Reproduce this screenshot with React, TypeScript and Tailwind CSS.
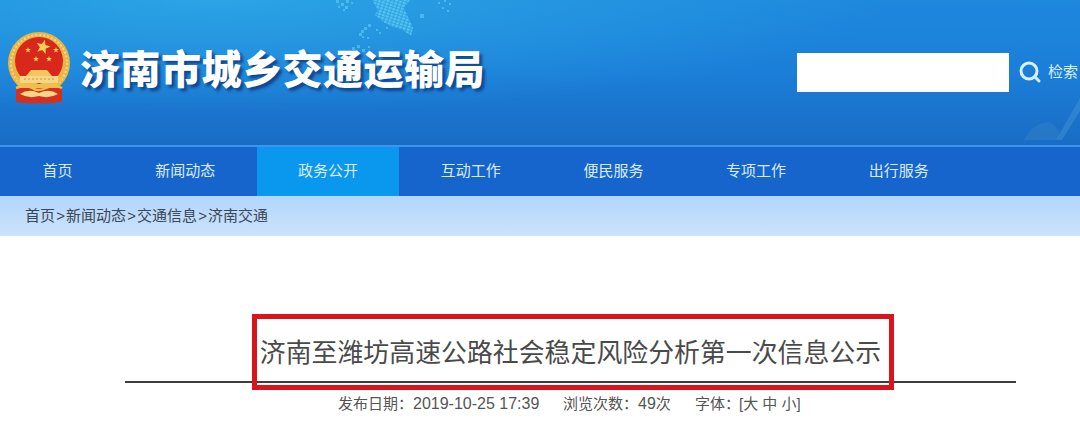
const cjk = "font-['Liberation_Sans','Noto_Sans_CJK_SC',sans-serif]";

const navItems = ["首页", "新闻动态", "政务公开", "互动工作", "便民服务", "专项工作", "出行服务"];
const crumbs = ["首页", "新闻动态", "交通信息", "济南交通"];

// 顶部的像素地图装饰
const pixels: [number, number, number][] = [
  [336, 0, 3], [341, 3, 3], [346, 0, 3], [345, 6, 3], [351, 2, 2], [338, 6, 2], [343, 9, 2],
  [420, 14, 4], [438, 2, 2], [444, 0, 2], [449, 3, 2], [442, 7, 2], [447, 10, 2],
  [368, 24, 3], [364, 27, 3], [361, 30, 3], [359, 33, 3], [362, 36, 2], [376, 29, 2], [379, 32, 2], [386, 27, 2],
  [352, 47, 3], [357, 45, 3], [362, 49, 3], [367, 37, 2], [368, 46, 2],
];

function PixelMap() {
  return (
    <svg className="absolute left-0 top-0" width="500" height="60" fill="#5cc8f0">
      <defs>
        <pattern id="grid" width="4" height="3" patternUnits="userSpaceOnUse" patternTransform="rotate(18)">
          <rect width="2.6" height="2" fill="#62cdf2" />
        </pattern>
      </defs>
      <path d="M372 0h38l-6 8 9 20-2 8-8-6-10-3-8-4-10-8 3-5z" fill="#39afe8" opacity="0.6" />
      <path d="M372 0h38l-6 8 9 20-2 8-8-6-10-3-8-4-10-8 3-5z" fill="url(#grid)" opacity="0.75" />
      {pixels.map(([x, y, s]) => (
        <rect key={`${x}-${y}`} x={x} y={y} width={s} height={s} opacity="0.65" />
      ))}
    </svg>
  );
}

function Star({ x, y, r, rot = 0 }: { x: number; y: number; r: number; rot?: number }) {
  const pts = Array.from({ length: 10 }, (_, i) => {
    const a = ((i * 36 - 90 + rot) * Math.PI) / 180;
    const d = i % 2 === 0 ? r : r * 0.42;
    return `${(x + d * Math.cos(a)).toFixed(1)},${(y + d * Math.sin(a)).toFixed(1)}`;
  }).join(" ");
  return <polygon points={pts} fill="#f6cf55" />;
}

function Emblem() {
  return (
    <svg width="64" height="72" viewBox="0 0 64 72" className="shrink-0">
      <circle cx="32" cy="31" r="31" fill="#eab544" />
      <circle cx="32" cy="31" r="28" fill="none" stroke="#f5d98c" strokeWidth="2" strokeDasharray="2 2" />
      <circle cx="32" cy="29" r="24" fill="#d8281b" />
      <path d="M7 44q7 12 18 17h14q11-5 18-17l-9 3-16 5-16-5z" fill="#efbf4a" />
      <path d="M9 56h46v14q-23 3-46 0z" fill="#d5301f" />
      <path d="M13 62q9-6 19-1q10-5 19 1q-9 5-19 2q-10 3-19-2z" fill="#f6d888" />
      <path d="M9 56q10-4 16 0t14 0q8-4 16 0" fill="none" stroke="#f0c050" strokeWidth="2.5" />
      <Star x={36} y={15} r={7.5} rot={15} />
      <Star x={21} y={18} r={3} />
      <Star x={49} y={18} r={3} />
      <Star x={29} y={27} r={3} />
      <Star x={42} y={27} r={3} />
      <path d="M24 38h16l5 6H19z" fill="#f3c75a" />
      <path d="M13 44h38v7H13z" fill="#f6d789" />
      <path d="M17 47h30" stroke="#d88f3a" strokeWidth="1" strokeDasharray="2 2" />
    </svg>
  );
}

export default function App() {
  return (
    <div className={`w-[1080px] h-[421px] overflow-hidden bg-white ${cjk}`}>
      {/* 头部 */}
      <header className="relative h-[145px] flex items-center justify-between overflow-hidden bg-[linear-gradient(180deg,#1e88dd_0%,#1b7ed8_50%,#1a6cc4_100%)]">
        <div className="absolute inset-0 bg-[radial-gradient(ellipse_at_20%_0%,rgba(48,175,232,0.7),rgba(48,175,232,0)_55%)]" />
        <PixelMap />
        <svg className="absolute right-0 bottom-0" width="60" height="50">
          <path d="M4 45q8-16 24-18 8 2 12 12l-4 6z" fill="#3a86c6" opacity="0.4" />
          <path d="M60 3L36 45h6L60 16z" fill="#4a9ad6" opacity="0.4" />
        </svg>

        <div className="relative flex items-center pl-[7px] pb-[9px]">
          <Emblem />
          <h1 className="ml-[9px] mt-[3px] text-[40px] leading-none font-black tracking-[0.5px] text-white [text-shadow:3px_3px_3px_rgba(10,50,120,0.75)]">
            济南市城乡交通运输局
          </h1>
        </div>

        <div className="relative flex items-center pb-[1px]">
          <div className="w-[212px] h-[39px] bg-white" />
          <svg className="ml-[9px]" width="24" height="24" viewBox="0 0 24 24" fill="none" stroke="#d8f0fb" strokeWidth="3" strokeLinecap="round">
            <circle cx="11" cy="11" r="8" />
            <path d="M17 17l4 4" />
          </svg>
          <span className="ml-[6px] w-[32px] whitespace-nowrap text-[15px] text-[#d8f0fb]">检索</span>
        </div>
      </header>

      {/* 导航 */}
      <div className="h-[2px] bg-[#3f95ee]" />
      <nav className="flex h-[49px] bg-[#1565cd]">
        {navItems.map((item, i) => (
          <div
            key={item}
            className={`flex items-center justify-center text-[15px] text-[#dcebfa] ${i === 0 ? "w-[114px] pl-[1px]" : "w-[142.7px]"} ${item === "政务公开" ? "bg-[#0a98ee]" : ""}`}
          >
            {item}
          </div>
        ))}
      </nav>

      {/* 面包屑 */}
      <div className="h-[40px] flex items-center pl-[25px] text-[15px] text-[#3b4656] bg-[linear-gradient(180deg,#b3d6fb,#cbe3fb)]">
        {crumbs.map((c, i) => (
          <span key={c} className="flex items-center">
            {i > 0 && <span className="w-[11px] text-center">&gt;</span>}
            {c}
          </span>
        ))}
      </div>

      {/* 正文 */}
      <main className="pl-[125px] pr-[64px] pt-[78px]">
        <div className="relative h-[69px] border-b-2 border-[#3c3c3c] flex items-start justify-center">
          <h2 className="pt-[20px] text-[25.9px] leading-[38px] whitespace-nowrap text-[#4a4a4a]">
            济南至潍坊高速公路社会稳定风险分析第一次信息公示
          </h2>
          <div className="absolute left-[127px] top-0 w-[642px] h-[76px] border-[5px] border-[#d9141c]" />
        </div>
        <p className="mt-[11px] pl-[213px] flex items-baseline text-[15px] leading-[20px] whitespace-nowrap text-[#555]">
          <span className="w-[225px]">
            发布日期：<span className="text-[16px]">2019-10-25 17:39</span>
          </span>
          <span className="w-[132px]">
            浏览次数：<span className="text-[16px]">49</span>次
          </span>
          <span>
            字体：<span className="-ml-[1px]">[大 中 小]</span>
          </span>
        </p>
      </main>
    </div>
  );
}
